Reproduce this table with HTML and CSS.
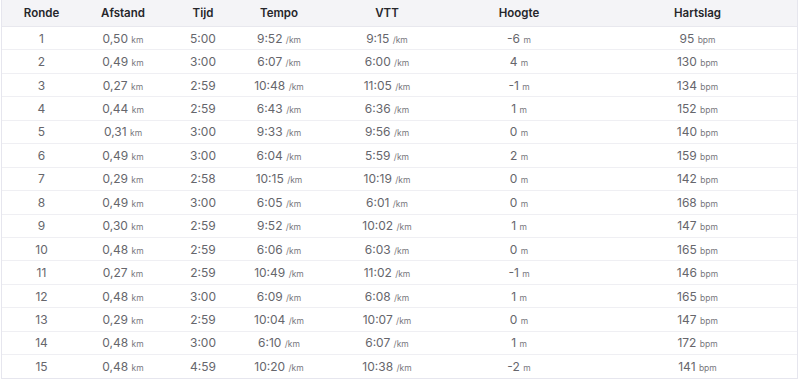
FILE: index.html
```html
<!DOCTYPE html>
<html lang="nl">
<head>
<meta charset="utf-8">
<link rel="stylesheet" href="styles.css">
</head>
<body>
<div class="wrap">
<table class="laps">
<colgroup>
<col class="c1"><col class="c2"><col class="c3"><col class="c4"><col class="c5"><col class="c6"><col class="c7">
</colgroup>
<thead>
<tr><th>Ronde</th><th>Afstand</th><th>Tijd</th><th>Tempo</th><th>VTT</th><th>Hoogte</th><th class="last">Hartslag</th></tr>
</thead>
<tbody>
<tr><td>1</td><td>0,50 <span class="u">km</span></td><td>5:00</td><td>9:52 <span class="u">/km</span></td><td>9:15 <span class="u">/km</span></td><td>-6 <span class="u">m</span></td><td class="last">95 <span class="u">bpm</span></td></tr>
<tr><td>2</td><td>0,49 <span class="u">km</span></td><td>3:00</td><td>6:07 <span class="u">/km</span></td><td>6:00 <span class="u">/km</span></td><td>4 <span class="u">m</span></td><td class="last">130 <span class="u">bpm</span></td></tr>
<tr><td>3</td><td>0,27 <span class="u">km</span></td><td>2:59</td><td>10:48 <span class="u">/km</span></td><td>11:05 <span class="u">/km</span></td><td>-1 <span class="u">m</span></td><td class="last">134 <span class="u">bpm</span></td></tr>
<tr><td>4</td><td>0,44 <span class="u">km</span></td><td>2:59</td><td>6:43 <span class="u">/km</span></td><td>6:36 <span class="u">/km</span></td><td>1 <span class="u">m</span></td><td class="last">152 <span class="u">bpm</span></td></tr>
<tr><td>5</td><td>0,31 <span class="u">km</span></td><td>3:00</td><td>9:33 <span class="u">/km</span></td><td>9:56 <span class="u">/km</span></td><td>0 <span class="u">m</span></td><td class="last">140 <span class="u">bpm</span></td></tr>
<tr><td>6</td><td>0,49 <span class="u">km</span></td><td>3:00</td><td>6:04 <span class="u">/km</span></td><td>5:59 <span class="u">/km</span></td><td>2 <span class="u">m</span></td><td class="last">159 <span class="u">bpm</span></td></tr>
<tr><td>7</td><td>0,29 <span class="u">km</span></td><td>2:58</td><td>10:15 <span class="u">/km</span></td><td>10:19 <span class="u">/km</span></td><td>0 <span class="u">m</span></td><td class="last">142 <span class="u">bpm</span></td></tr>
<tr><td>8</td><td>0,49 <span class="u">km</span></td><td>3:00</td><td>6:05 <span class="u">/km</span></td><td>6:01 <span class="u">/km</span></td><td>0 <span class="u">m</span></td><td class="last">168 <span class="u">bpm</span></td></tr>
<tr><td>9</td><td>0,30 <span class="u">km</span></td><td>2:59</td><td>9:52 <span class="u">/km</span></td><td>10:02 <span class="u">/km</span></td><td>1 <span class="u">m</span></td><td class="last">147 <span class="u">bpm</span></td></tr>
<tr><td>10</td><td>0,48 <span class="u">km</span></td><td>2:59</td><td>6:06 <span class="u">/km</span></td><td>6:03 <span class="u">/km</span></td><td>0 <span class="u">m</span></td><td class="last">165 <span class="u">bpm</span></td></tr>
<tr><td>11</td><td>0,27 <span class="u">km</span></td><td>2:59</td><td>10:49 <span class="u">/km</span></td><td>11:02 <span class="u">/km</span></td><td>-1 <span class="u">m</span></td><td class="last">146 <span class="u">bpm</span></td></tr>
<tr><td>12</td><td>0,48 <span class="u">km</span></td><td>3:00</td><td>6:09 <span class="u">/km</span></td><td>6:08 <span class="u">/km</span></td><td>1 <span class="u">m</span></td><td class="last">165 <span class="u">bpm</span></td></tr>
<tr><td>13</td><td>0,29 <span class="u">km</span></td><td>2:59</td><td>10:04 <span class="u">/km</span></td><td>10:07 <span class="u">/km</span></td><td>0 <span class="u">m</span></td><td class="last">147 <span class="u">bpm</span></td></tr>
<tr><td>14</td><td>0,48 <span class="u">km</span></td><td>3:00</td><td>6:10 <span class="u">/km</span></td><td>6:07 <span class="u">/km</span></td><td>1 <span class="u">m</span></td><td class="last">172 <span class="u">bpm</span></td></tr>
<tr><td>15</td><td>0,48 <span class="u">km</span></td><td>4:59</td><td>10:20 <span class="u">/km</span></td><td>10:38 <span class="u">/km</span></td><td>-2 <span class="u">m</span></td><td class="last">141 <span class="u">bpm</span></td></tr>
</tbody>
</table>
</div>
</body>
</html>
```

FILE: styles.css
```css
html, body {
  margin: 0;
  padding: 0;
  background: #ffffff;
}

body {
  font-family: Inter, "Noto Sans", "Liberation Sans", sans-serif;
}

.wrap {
  margin-left: 1px;
  width: 797px;
  box-sizing: border-box;
  border-left: 1px solid #e6e6ee;
  border-right: 1px solid #e6e6ee;
  border-bottom: 1px solid #e6e6ee;
}

.laps {
  width: 100%;
  table-layout: fixed;
  border-collapse: collapse;
}

.c1 { width: 79px; }
.c2 { width: 84px; }
.c3 { width: 76px; }
.c4 { width: 76px; }
.c5 { width: 140px; }
.c6 { width: 124px; }

.laps th {
  height: 26px;
  padding: 0;
  background: #f4f4f7;
  border-bottom: 1px solid #e8e8ee;
  font-size: 11.5px;
  font-weight: 600;
  color: #26262b;
  text-align: center;
}

.laps td {
  height: 22.45px;
  padding: 0;
  border-bottom: 1px solid #efeff3;
  font-size: 12px;
  font-weight: 400;
  color: #66666c;
  text-align: center;
}

.laps tbody tr:last-child td {
  border-bottom: none;
}

.laps .last {
  padding-left: 17px;
}

.u {
  font-size: 8.5px;
  color: #77777d;
}
```
